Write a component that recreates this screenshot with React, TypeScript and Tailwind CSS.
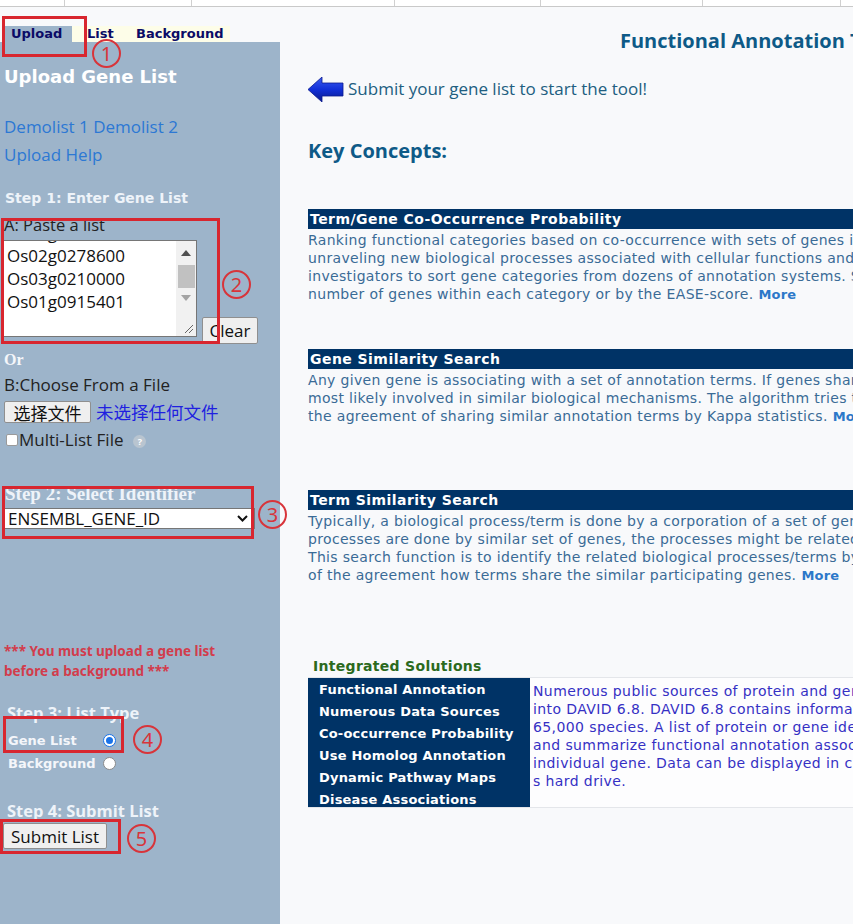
const verdana = "font-['DejaVu_Sans',Verdana,sans-serif]";
const segoe = "font-['Open_Sans',sans-serif]";

function Circled({ n, className }: { n: string; className: string }) {
  return (
    <div
      className={`absolute flex items-center justify-center rounded-full border-2 border-[#d8343a] text-[#d8343a] text-[20px] leading-none font-['Noto_Sans',sans-serif] w-[29px] h-[29px] ${className}`}
    >
      {n}
    </div>
  );
}

function Section({ title, lines, h }: { title: string; lines: string[]; h: string }) {
  return (
    <div className={h}>
      <div className={`h-[20px] bg-[#003366] pl-[2px] text-white font-bold text-[14px] tracking-[0.45px] leading-[20px] whitespace-nowrap ${verdana}`}>
        {title}
      </div>
      <div className={`mt-[2px] text-[14px] tracking-[0.33px] leading-[18px] text-[#3a6b96] whitespace-nowrap ${verdana}`}>
        {lines.map((l, i) => (
          <div key={i}>
            {l}
            {i === lines.length - 1 && (
              <span className="ml-[5px] font-bold text-[13px] tracking-[0.2px] text-[#2c78c9]">More</span>
            )}
          </div>
        ))}
      </div>
    </div>
  );
}

function Arrow() {
  return (
    <svg width="36" height="25" viewBox="0 0 36 25">
      <defs>
        <linearGradient id="ag" x1="0" y1="0" x2="0" y2="1">
          <stop offset="0" stopColor="#3a5cf0" />
          <stop offset="0.5" stopColor="#1230d8" />
          <stop offset="1" stopColor="#0a1a8a" />
        </linearGradient>
      </defs>
      <polygon points="0,12.5 14,0 14,6 35,6 35,19 14,19 14,25" fill="url(#ag)" stroke="#0a1a90" strokeWidth="0.8" />
    </svg>
  );
}

export default function App() {
  const solutions = [
    "Functional Annotation",
    "Numerous Data Sources",
    "Co-occurrence Probability",
    "Use Homolog Annotation",
    "Dynamic Pathway Maps",
    "Disease Associations",
  ];

  return (
    <div className="relative w-[853px] h-[924px] overflow-hidden bg-[#f8f9fb] flex flex-col">
      {/* top nav remains */}
      <div className="h-[7px] flex bg-white border-b border-[#c9c9c9]">
        <div className="w-[65px] border-r border-[#d0d0d0]" />
        <div className="w-[127px] border-r border-[#d0d0d0]" />
        <div className="w-[203px] border-r border-[#d0d0d0]" />
        <div className="w-[146px] border-r border-[#d0d0d0]" />
        <div className="w-[162px] border-r border-[#d0d0d0]" />
        <div className="w-[138px] border-r border-[#d0d0d0]" />
      </div>

      <div className="flex flex-1 min-h-0">
        {/* left panel */}
        <aside className="w-[280px] shrink-0 flex flex-col">
          <div className={`mt-[19px] h-[16px] flex text-[13px] font-bold text-[#0b0b66] leading-[16px] ${verdana}`}>
            <div className="ml-[5px] w-[67px] bg-[#9db4ca] pl-[6px]">Upload</div>
            <div className="w-[56px] bg-[#fdfde8] pl-[15px]">List</div>
            <div className="w-[102px] bg-[#fdfde8] pl-[8px]">Background</div>
          </div>
          <div className="flex-1 bg-[#9db4ca] pl-[4px] pt-[24px] flex flex-col">
            <div className={`text-[18px] font-bold text-white leading-[22px] ${verdana}`}>Upload Gene List</div>
            <div className={`mt-[25px] text-[17px] leading-[28px] text-[#2c78d4] ${segoe}`}>
              <div>Demolist 1 Demolist 2</div>
              <div>Upload Help</div>
            </div>
            <div className={`mt-[19px] ml-[1px] text-[14px] font-bold leading-[20px] text-[#eef3f9] ${verdana}`}>
              Step 1: Enter Gene List
            </div>
            <div className={`mt-[7px] text-[16.5px] leading-[20px] text-[#222] ${segoe}`}>A: Paste a list</div>
            <div className="mt-[5px] -ml-[1px] flex items-end">
              <div className="relative w-[194px] h-[97px] mb-[7px] bg-white border border-[#767676] overflow-hidden">
                <div className={`-mt-[20px] pl-[3px] text-[17px] leading-[23px] text-[#111] ${segoe}`}>
                  <div>Os02g0170900</div>
                  <div>Os02g0278600</div>
                  <div>Os03g0210000</div>
                  <div>Os01g0915401</div>
                </div>
                <div className="absolute right-0 top-0 bottom-0 w-[20px] bg-[#f1f1f1] flex flex-col items-center">
                  <div className="mt-[9px] w-0 h-0 border-l-[5px] border-r-[5px] border-b-[6px] border-l-transparent border-r-transparent border-b-[#505050]" />
                  <div className="mt-[9px] w-[17px] h-[23px] bg-[#c1c1c1]" />
                  <div className="mt-[7px] w-0 h-0 border-l-[5px] border-r-[5px] border-t-[6px] border-l-transparent border-r-transparent border-t-[#a3a3a3]" />
                </div>
                <svg className="absolute right-[2px] bottom-[2px]" width="12" height="12" viewBox="0 0 12 12">
                  <path d="M11 3 L3 11 M11 7 L7 11" stroke="#666" strokeWidth="1" />
                </svg>
              </div>
              <button className={`ml-[5px] w-[56px] h-[27px] bg-[#efefef] border border-[#8f8f8f] rounded-[2px] text-[17px] text-[#111] leading-none ${segoe}`}>
                Clear
              </button>
            </div>
            <div className="mt-[6px] text-[16px] font-bold leading-[20px] text-[#f4f6fa] font-['Liberation_Serif',serif]">Or</div>
            <div className={`mt-[4px] text-[17px] leading-[22px] text-[#222] ${segoe}`}>B:Choose From a File</div>
            <div className="mt-[5px] flex items-center h-[22px]">
              <button className="w-[87px] h-[22px] bg-[#efefef] border border-[#8f8f8f] rounded-[2px] text-[17px] leading-none text-[#111] font-['Noto_Sans_CJK_SC',sans-serif]">
                选择文件
              </button>
              <span className="ml-[5px] text-[17.5px] text-[#1f1fe0] font-['Noto_Sans_CJK_SC',sans-serif]">未选择任何文件</span>
            </div>
            <div className={`mt-[6px] h-[22px] flex items-center text-[17px] text-[#222] ${segoe}`}>
              <span className="ml-[2px] w-[12px] h-[12px] bg-white rounded-[2px] border border-[#9a9a9a]" />
              <span className="ml-[1px]">Multi-List File</span>
              <span className="ml-[10px] mt-[3px] w-[13px] h-[13px] rounded-full bg-[#b9c5d0] text-white text-[9px] font-bold flex items-center justify-center leading-none">?</span>
            </div>
            <div className="mt-[33px] ml-[1px] text-[19px] font-bold leading-[20px] text-[#eef3f9] font-['Liberation_Serif',serif]">
              Step 2: Select Identifier
            </div>
            <div className={`mt-[4px] -ml-[1px] w-[252px] h-[21px] bg-white border border-[#767676] flex items-center justify-between pl-[4px] pr-[6px] text-[17px] text-[#111] ${segoe}`}>
              <span>ENSEMBL_GENE_ID</span>
              <svg width="11" height="7" viewBox="0 0 11 7">
                <path d="M1 1 L5.5 5.5 L10 1" stroke="#111" strokeWidth="2" fill="none" />
              </svg>
            </div>
            <div className="mt-[112px] text-[13.5px] font-bold leading-[20px] text-[#d23c4c] font-['Noto_Sans',sans-serif]">
              <div>*** You must upload a gene list</div>
              <div>before a background ***</div>
            </div>
            <div className={`mt-[22px] ml-[3px] text-[16.5px] font-bold leading-[20px] text-[#eef3f9] ${segoe}`}>Step 3: List Type</div>
            <div className={`mt-[6px] ml-[4px] text-[13px] font-bold text-[#f4f6fa] ${verdana}`}>
              <div className="h-[23px] flex items-center">
                <span className="w-[95px]">Gene List</span>
                <span className="w-[13px] h-[13px] rounded-full border border-[#1a73e8] bg-white flex items-center justify-center">
                  <span className="w-[7px] h-[7px] rounded-full bg-[#1a73e8]" />
                </span>
              </div>
              <div className="h-[23px] flex items-center">
                <span className="w-[95px]">Background</span>
                <span className="w-[13px] h-[13px] rounded-full border border-[#8a8a8a] bg-white" />
              </div>
            </div>
            <div className={`mt-[26px] ml-[3px] text-[16.5px] font-bold leading-[20px] text-[#eef3f9] ${segoe}`}>Step 4: Submit List</div>
            <button className={`mt-[2px] -ml-[1px] w-[104px] h-[26px] bg-[#efefef] border border-[#8f8f8f] rounded-[2px] text-[17px] leading-none text-[#111] ${segoe}`}>
              Submit List
            </button>
          </div>
        </aside>

        {/* right content */}
        <main className="flex-1 min-w-0 overflow-hidden">
          <div className="w-[1000px]">
            <div className={`mt-[22px] ml-[340px] text-[20px] font-bold leading-[24px] text-[#0e5a87] whitespace-nowrap ${segoe}`}>
              Functional Annotation Tool
            </div>
            <div className="mt-[23px] ml-[28px] h-[26px] flex items-center">
              <Arrow />
              <span className={`ml-[4px] text-[17px] text-[#215e80] ${segoe}`}>Submit your gene list to start the tool!</span>
            </div>
            <div className={`mt-[35px] ml-[28px] text-[20px] font-bold leading-[28px] text-[#0e5a87] ${segoe}`}>Key Concepts:</div>
            <div className="mt-[44px] ml-[28px]">
              <Section
                h="h-[140px]"
                title="Term/Gene Co-Occurrence Probability"
                lines={[
                  "Ranking functional categories based on co-occurrence with sets of genes in a list is a powerful approach",
                  "unraveling new biological processes associated with cellular functions and disease. The tool enables",
                  "investigators to sort gene categories from dozens of annotation systems. Sorting can be either by the",
                  "number of genes within each category or by the EASE-score.",
                ]}
              />
              <Section
                h="h-[141px]"
                title="Gene Similarity Search"
                lines={[
                  "Any given gene is associating with a set of annotation terms. If genes share similar set of those terms, they are",
                  "most likely involved in similar biological mechanisms. The algorithm tries to find other genes by measuring",
                  "the agreement of sharing similar annotation terms by Kappa statistics.",
                ]}
              />
              <Section
                h="h-[166px]"
                title="Term Similarity Search"
                lines={[
                  "Typically, a biological process/term is done by a corporation of a set of genes. If two biological",
                  "processes are done by similar set of genes, the processes might be related in biological sense.",
                  "This search function is to identify the related biological processes/terms by measuring the degree",
                  "of the agreement how terms share the similar participating genes.",
                ]}
              />
              <div className={`ml-[5px] text-[14px] tracking-[0.3px] font-bold leading-[20px] text-[#2b6a1d] ${verdana}`}>Integrated Solutions</div>
              <div className="mt-[1px] h-[131px] flex border-y border-[#e4e6ea] bg-[#fdfdfe]">
                <div className={`w-[222px] shrink-0 bg-[#003366] pt-[1px] pl-[11px] text-[13px] tracking-[0.2px] font-bold leading-[22px] text-white whitespace-nowrap ${verdana}`}>
                  {solutions.map((s) => (
                    <div key={s}>{s}</div>
                  ))}
                </div>
                <div className={`pl-[3px] pt-[4px] text-[14px] tracking-[0.4px] leading-[18px] text-[#3530c4] whitespace-nowrap ${verdana}`}>
                  <div>Numerous public sources of protein and gene annotations are integrated</div>
                  <div>into DAVID 6.8. DAVID 6.8 contains information for over</div>
                  <div>65,000 species. A list of protein or gene identifiers can be uploaded</div>
                  <div>and summarize functional annotation associated with each</div>
                  <div>individual gene. Data can be displayed in charts or downloaded to a user'</div>
                  <div>s hard drive.</div>
                </div>
              </div>
            </div>
          </div>
        </main>
      </div>

      {/* red annotation marks */}
      <div className="absolute left-[2px] top-[16px] w-[85px] h-[41px] border-[3px] border-[#d8262f]" />
      <Circled n="1" className="left-[92px] top-[39px]" />
      <div className="absolute left-[1px] top-[218px] w-[219px] h-[126px] border-[3px] border-[#d8262f]" />
      <Circled n="2" className="left-[222px] top-[270px]" />
      <div className="absolute left-[2px] top-[486px] w-[252px] h-[53px] border-[3px] border-[#d8262f]" />
      <Circled n="3" className="left-[258px] top-[500px]" />
      <div className="absolute left-[3px] top-[716px] w-[121px] h-[37px] border-[3px] border-[#d8262f]" />
      <Circled n="4" className="left-[133px] top-[725px]" />
      <div className="absolute left-[0px] top-[819px] w-[121px] h-[35px] border-[3px] border-[#d8262f]" />
      <Circled n="5" className="left-[127px] top-[824px]" />
    </div>
  );
}
